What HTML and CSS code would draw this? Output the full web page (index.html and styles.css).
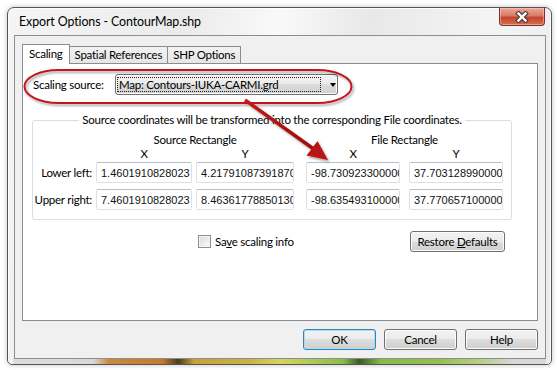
FILE: index.html
```html
<!DOCTYPE html>
<html>

<head>
  <meta charset="utf-8">
  <title>Export Options - ContourMap.shp</title>
  <link rel="stylesheet" href="styles.css">
</head>

<body>
  <div class="window">
    <div class="titlebar">
      <span class="caption">Export Options - ContourMap.shp</span>
      <div class="close-btn">
        <svg width="16" height="12" viewBox="0 0 16 12">
          <path d="M4.5 2.5 L11.5 9.5 M11.5 2.5 L4.5 9.5" stroke="#4b3a36" stroke-width="4.6" stroke-linecap="square"/>
          <path d="M4.5 2.5 L11.5 9.5 M11.5 2.5 L4.5 9.5" stroke="#fff" stroke-width="2.4" stroke-linecap="square"/>
        </svg>
      </div>
    </div>

    <div class="client">
      <div class="tabs">
        <div class="tab selected">Scaling</div>
        <div class="tab">Spatial References</div>
        <div class="tab">SHP Options</div>
      </div>

      <div class="panel">
        <div class="source-row">
          <span class="source-label">Scaling source:</span>
          <div class="combo">
            <span class="combo-text">Map: Contours-IUKA-CARMI.grd</span>
            <span class="combo-arrow"></span>
          </div>
        </div>

        <fieldset class="group">
          <legend>Source coordinates will be transformed into the corresponding File coordinates.</legend>
          <div class="coord-grid">
            <div class="rect-title source-title">Source Rectangle</div>
            <div class="rect-title file-title">File Rectangle</div>

            <div class="axis col-sx">X</div>
            <div class="axis col-sy">Y</div>
            <div class="axis col-fx">X</div>
            <div class="axis col-fy">Y</div>

            <div class="row-label">Lower left:</div>
            <input class="coord col-sx" type="text" value="1.4601910828023" readonly>
            <input class="coord col-sy" type="text" value="4.21791087391870" readonly>
            <input class="coord col-fx" type="text" value="-98.7309233000000" readonly>
            <input class="coord col-fy" type="text" value="37.703128990000" readonly>

            <div class="row-label">Upper right:</div>
            <input class="coord col-sx" type="text" value="7.4601910828023" readonly>
            <input class="coord col-sy" type="text" value="8.46361778850130" readonly>
            <input class="coord col-fx" type="text" value="-98.6354931000000" readonly>
            <input class="coord col-fy" type="text" value="37.770657100000" readonly>
          </div>
        </fieldset>

        <div class="options-row">
          <label class="check">
            <span class="check-box"></span>
            <span>Sa<u>v</u>e scaling info</span>
          </label>
          <div class="btn restore">Restore <u>D</u>efaults</div>
        </div>
      </div>

      <div class="dialog-buttons">
        <div class="btn default">OK</div>
        <div class="btn">Cancel</div>
        <div class="btn">Help</div>
      </div>
    </div>
    <div class="frame-bottom"></div>
  </div>

  <!-- red callout drawn over the dialog -->
  <svg class="callout" width="557" height="370" viewBox="0 0 557 370">
    <defs>
      <filter id="shade" x="-10%" y="-10%" width="120%" height="130%">
        <feDropShadow dx="1.5" dy="2" stdDeviation="1.2" flood-color="#000" flood-opacity="0.35"/>
      </filter>
      <linearGradient id="arrowfill" x1="0" y1="0" x2="1" y2="1">
        <stop offset="0" stop-color="#c41a1a"/>
        <stop offset="1" stop-color="#a00c0c"/>
      </linearGradient>
    </defs>
    <g filter="url(#shade)">
      <rect x="24.5" y="70" width="327" height="33" rx="34" ry="16.5" fill="none" stroke="#c3161c" stroke-width="2"/>
      <line x1="245" y1="100" x2="313" y2="148.5" stroke="url(#arrowfill)" stroke-width="3.4"/>
      <polygon points="328,160 317.5,141 306.5,155.5" fill="#b81414"/>
    </g>
  </svg>
</body>
</html>
```

FILE: styles.css
```css
body {
  background: #fff;
  font-family: Lato, "Liberation Sans", sans-serif;
  font-size: 11.5px;
  letter-spacing: -0.25px;
  color: #000;
  margin: 0;
  position: relative;
  width: 557px;
  height: 370px;
  overflow: hidden;
}

.window {
  background: linear-gradient(100deg, #f5f5f5 0%, #ebebeb 30%, #f9f9f9 45%, #e8e8e8 60%, #f4f4f4 80%, #eaeaea 100%);
  border: 1px solid #555;
  border-radius: 7px 7px 5px 5px;
  box-shadow: 0 0 5px rgba(0, 0, 0, 0.25), inset 0 0 0 1px rgba(255, 255, 255, 0.8);
  box-sizing: border-box;
  height: 358px;
  margin: 7px;
  padding: 0 5px 0 6px;
  width: 545px;
}

.titlebar {
  display: flex;
  height: 27px;
  justify-content: space-between;
}

.caption {
  font-size: 12.4px;
  letter-spacing: -0.1px;
  line-height: 16px;
  margin: 6px 0 0 5px;
}

.close-btn {
  align-items: center;
  background: linear-gradient(#eaa898 0%, #d97a66 45%, #c4452e 55%, #d2704f 100%);
  border: 1px solid #7b3228;
  border-top: none;
  border-radius: 0 0 4px 4px;
  box-shadow: inset 0 0 0 1px rgba(255, 210, 200, 0.5);
  box-sizing: border-box;
  display: flex;
  height: 18px;
  justify-content: center;
  margin-right: 1px;
  width: 46px;
}

.client {
  background: #f0f0f0;
  border: 1px solid #8d8d8d;
  box-sizing: border-box;
  height: 324px;
  padding: 8px 7px 0 7px;
}

.tabs {
  align-items: flex-end;
  display: flex;
  height: 19px;
}

.tab {
  background: linear-gradient(#f3f3f3, #e5e5e5);
  border: 1px solid #898c95;
  border-bottom: none;
  box-sizing: border-box;
  height: 17px;
  line-height: 15px;
  padding: 0 5px;
}

.tab + .tab {
  margin-left: -1px;
}

.tab.selected {
  background: #fff;
  height: 20px;
  line-height: 17px;
  margin-bottom: -1px;
  padding: 0 6px;
  position: relative;
  z-index: 1;
}

.panel {
  background: #fff;
  border: 1px solid #898c95;
  box-sizing: border-box;
  height: 258px;
}

.source-row {
  align-items: center;
  display: flex;
  padding: 10px 0 0 10px;
}

.source-label {
  width: 82px;
}

.combo {
  align-items: center;
  background: linear-gradient(#f2f2f2 0%, #ebebeb 50%, #dddddd 50%, #cfcfcf 100%);
  border: 1px solid #707070;
  border-radius: 3px;
  box-shadow: inset 0 0 0 1px #fbfbfb;
  box-sizing: border-box;
  display: flex;
  height: 21px;
  width: 223px;
}

.combo-text {
  line-height: 13px;
  margin-left: 2px;
  outline: 1px dotted #222;
  padding: 0 1px;
  width: 200px;
}

.combo-arrow {
  border-left: 3.5px solid transparent;
  border-right: 3.5px solid transparent;
  border-top: 4px solid #000;
  margin-left: 10px;
}

.group {
  border: 1px solid #d5dfe5;
  border-radius: 3px;
  box-sizing: border-box;
  margin: 18px 0 0 9px;
  padding: 0 0 9px 0;
  width: 480px;
}

.group legend {
  line-height: 14px;
  margin: 0 auto;
  padding: 0 3px;
}

.coord-grid {
  column-gap: 4px;
  display: grid;
  grid-template-columns: 59px 96px 98px 4px 94px 99px;
  grid-template-rows: 14px 15px 27px 21px;
  margin-top: 6px;
}

.rect-title {
  line-height: 14px;
  text-align: center;
}

.source-title {
  grid-column: 2 / 4;
}

.file-title {
  grid-column: 5 / 7;
}

.axis {
  line-height: 13px;
  text-align: center;
}

.col-sx {
  grid-column: 2;
}

.col-sy {
  grid-column: 3;
}

.col-fx {
  grid-column: 5;
}

.col-fy {
  grid-column: 6;
  justify-self: end;
  width: 94px;
}

.row-label {
  grid-column: 1;
  line-height: 21px;
  text-align: right;
  white-space: nowrap;
}

.coord {
  align-self: start;
  border: 1px solid #dde1e6;
  border-top-color: #b9bcc2;
  border-radius: 2px;
  box-sizing: border-box;
  color: #111;
  font-family: "Liberation Sans", Arial, sans-serif;
  font-size: 11px;
  height: 21px;
  letter-spacing: 0;
  margin: 0;
  outline: none;
  padding: 0 0 0 4px;
  width: 100%;
}

.coord.col-fy {
  width: 94px;
}

.options-row {
  align-items: center;
  display: flex;
  margin-top: 11px;
  padding-left: 175px;
}

.check {
  align-items: center;
  display: flex;
  gap: 4px;
}

.check-box {
  background: linear-gradient(135deg, #d9d9d9, #fbfbfb);
  border: 1px solid #8e8f8f;
  box-shadow: inset 0 0 0 1px #f4f4f4;
  box-sizing: border-box;
  height: 13px;
  width: 13px;
}

.btn {
  background: linear-gradient(#f2f2f2 0%, #ebebeb 50%, #dddddd 50%, #cfcfcf 100%);
  border: 1px solid #707070;
  border-radius: 3px;
  box-shadow: inset 0 0 0 1px #fcfcfc;
  box-sizing: border-box;
  height: 21px;
  line-height: 19px;
  text-align: center;
  width: 73px;
}

.btn.restore {
  margin: 0 32px 0 auto;
  width: 95px;
}

.btn.default {
  border-color: #3c7fb1;
  box-shadow: inset 0 0 0 1px #9fe3fb;
}

.dialog-buttons {
  display: flex;
  gap: 8px;
  justify-content: flex-end;
  margin-top: 8px;
}

.frame-bottom {
  background: linear-gradient(90deg, #dcdcdc 0%, #d9d9d9 15%, #c98a3e 18%, #c47a2e 28%, #4a3a1c 31%, #c7a23c 34%, #c9b048 44%, #d6d35c 50%, #aec95a 56%, #8cbb4a 62%, #3c5a22 65%, #8bb948 69%, #95c050 80%, #b8cf8a 88%, #d8d8d8 94%);
  height: 5px;
  margin: 0 0 0 -1px;
}

.callout {
  left: 0;
  pointer-events: none;
  position: absolute;
  top: 0;
}
```
